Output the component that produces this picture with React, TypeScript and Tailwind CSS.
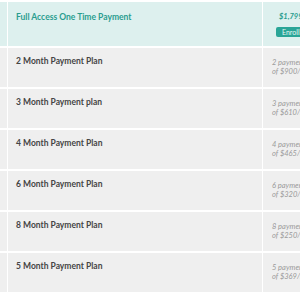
import React from "react";

type Plan = {
  title: string;
  line1: string;
  line2: string;
};

const plans: Plan[] = [
  { title: "2 Month Payment Plan", line1: "2 payments", line2: "of $900/month" },
  { title: "3 Month Payment plan", line1: "3 payments", line2: "of $610/month" },
  { title: "4 Month Payment Plan", line1: "4 payments", line2: "of $465/month" },
  { title: "6 Month Payment Plan", line1: "6 payments", line2: "of $320/month" },
  { title: "8 Month Payment Plan", line1: "8 payments", line2: "of $250/month" },
  { title: "5 Month Payment Plan", line1: "5 payments", line2: "of $369/month" },
];

const App: React.FC = () => {
  return (
    <div className="w-[300px] h-[300px] overflow-hidden bg-white pt-[2px] font-['Lato','Liberation_Sans',sans-serif]">
      <div className="flex flex-col gap-[2px] w-[360px]">
        <div className="flex gap-[1px] h-[44px]">
          <div className="w-[7px] bg-[#ddf0ee]" />
          <div className="w-[254px] bg-[#ddf0ee] pl-[8px] pt-[10px]">
            <p className="text-[8.5px] leading-[11px] font-bold text-[#2a9d8f]">
              Full Access One Time Payment
            </p>
          </div>
          <div className="flex-1 bg-[#ddf0ee] pl-[16px] pt-[10px] flex flex-col items-start">
            <p className="text-[7.5px] leading-[10px] font-bold italic text-[#2a9d8f]">$1,799</p>
            <button className="mt-[5px] ml-[-3px] h-[10px] px-[6px] rounded-[2px] bg-[#2aa597] text-[#e6f6f4] text-[7px] leading-[10px]">
              Enroll Now
            </button>
          </div>
        </div>
        {plans.map((plan) => (
          <div key={plan.title} className="flex gap-[1px] h-[39px]">
            <div className="w-[7px] bg-[#efefef]" />
            <div className="w-[254px] bg-[#efefef] pl-[8px] pt-[8px]">
              <p className="text-[8.5px] leading-[11px] font-bold text-[#454545]">
                {plan.title}
              </p>
            </div>
            <div className="flex-1 bg-[#efefef] pl-[9px] pt-[10px] text-[7.5px] italic text-[#9a9a9a] leading-[9px]">
              <p>{plan.line1}</p>
              <p>{plan.line2}</p>
            </div>
          </div>
        ))}
      </div>
    </div>
  );
};

export default App;
